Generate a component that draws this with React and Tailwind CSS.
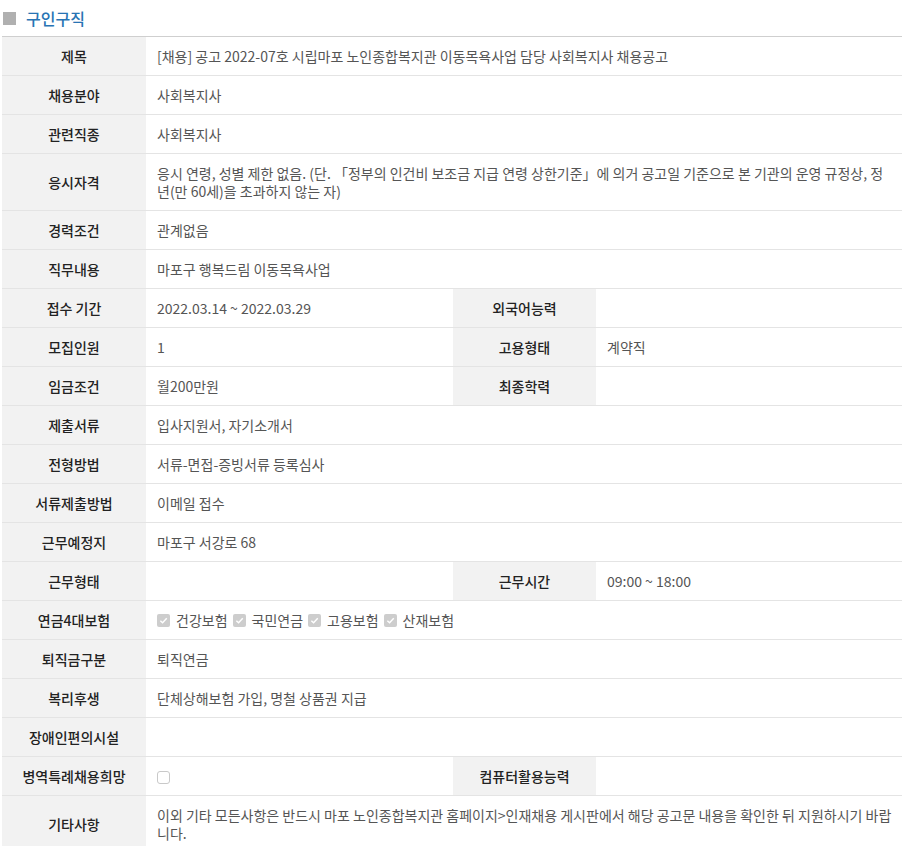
import React from "react";

const Check = ({ checked }) => (
    <span
        className={
            checked
                ? "inline-flex items-center justify-center w-[13px] h-[13px] rounded-[2px] bg-[#cdcdcd]"
                : "inline-block w-[13px] h-[13px] rounded-[3px] border border-[#c9c9c9] bg-white align-[-2px]"
        }
    >
        {checked && (
            <svg width="9" height="9" viewBox="0 0 10 10">
                <path d="M1.5 5.2 L4 7.6 L8.6 2.6" fill="none" stroke="#fff" strokeWidth="1.6" />
            </svg>
        )}
    </span>
);

const Label = ({ children }) => (
    <th className="bg-[#f2f2f2] text-[#222] font-medium text-center px-1 py-[10px] border-b border-[#e4e4e4]">
        {children}
    </th>
);

const Value = ({ children, span = 1 }) => (
    <td colSpan={span} className="text-[#555] pl-[11px] pr-[10px] py-[10px] border-b border-[#e4e4e4]">
        {children}
    </td>
);

const App = () => {
    const insurance = ["건강보험", "국민연금", "고용보험", "산재보험"];

    return (
        <div className="bg-white w-[923px] min-h-[846px] px-[2px] font-['Noto_Sans_CJK_KR','Noto_Sans',sans-serif] text-[14px] leading-[18px]">
            {/* 제목 */}
            <div className="flex items-center h-[36px] pl-[1px]">
                <span className="w-[13px] h-[13px] bg-[#b0b0b0] mr-[10px]"></span>
                <h3 className="text-[16px] text-[#2874b4] font-medium">구인구직</h3>
            </div>

            <table className="w-[900px] border-collapse table-fixed border-t border-[#cfcfcf]">
                <colgroup>
                    <col className="w-[144px]" />
                    <col className="w-[307px]" />
                    <col className="w-[143px]" />
                    <col className="w-[306px]" />
                </colgroup>
                <tbody>
                    <tr>
                        <Label>제목</Label>
                        <Value span={3}>[채용] 공고 2022-07호 시립마포 노인종합복지관 이동목욕사업 담당 사회복지사 채용공고</Value>
                    </tr>
                    <tr>
                        <Label>채용분야</Label>
                        <Value span={3}>사회복지사</Value>
                    </tr>
                    <tr>
                        <Label>관련직종</Label>
                        <Value span={3}>사회복지사</Value>
                    </tr>
                    <tr>
                        <Label>응시자격</Label>
                        <Value span={3}>
                            응시 연령, 성별 제한 없음. (단. 「정부의 인건비 보조금 지급 연령 상한기준」에 의거 공고일 기준으로 본 기관의 운영 규정상, 정년(만 60세)을 초과하지 않는 자)
                        </Value>
                    </tr>
                    <tr>
                        <Label>경력조건</Label>
                        <Value span={3}>관계없음</Value>
                    </tr>
                    <tr>
                        <Label>직무내용</Label>
                        <Value span={3}>마포구 행복드림 이동목욕사업</Value>
                    </tr>
                    <tr>
                        <Label>접수 기간</Label>
                        <Value>2022.03.14 ~ 2022.03.29</Value>
                        <Label>외국어능력</Label>
                        <Value></Value>
                    </tr>
                    <tr>
                        <Label>모집인원</Label>
                        <Value>1</Value>
                        <Label>고용형태</Label>
                        <Value>계약직</Value>
                    </tr>
                    <tr>
                        <Label>임금조건</Label>
                        <Value>월200만원</Value>
                        <Label>최종학력</Label>
                        <Value></Value>
                    </tr>
                    <tr>
                        <Label>제출서류</Label>
                        <Value span={3}>입사지원서, 자기소개서</Value>
                    </tr>
                    <tr>
                        <Label>전형방법</Label>
                        <Value span={3}>서류-면접-증빙서류 등록심사</Value>
                    </tr>
                    <tr>
                        <Label>서류제출방법</Label>
                        <Value span={3}>이메일 접수</Value>
                    </tr>
                    <tr>
                        <Label>근무예정지</Label>
                        <Value span={3}>마포구 서강로 68</Value>
                    </tr>
                    <tr>
                        <Label>근무형태</Label>
                        <Value></Value>
                        <Label>근무시간</Label>
                        <Value>09:00 ~ 18:00</Value>
                    </tr>
                    <tr>
                        <Label>연금4대보험</Label>
                        <Value span={3}>
                            <div className="flex items-center gap-[5px]">
                                {insurance.map((name) => (
                                    <span key={name} className="inline-flex items-center gap-[6px]">
                                        <Check checked />
                                        <span>{name}</span>
                                    </span>
                                ))}
                            </div>
                        </Value>
                    </tr>
                    <tr>
                        <Label>퇴직금구분</Label>
                        <Value span={3}>퇴직연금</Value>
                    </tr>
                    <tr>
                        <Label>복리후생</Label>
                        <Value span={3}>단체상해보험 가입, 명철 상품권 지급</Value>
                    </tr>
                    <tr>
                        <Label>장애인편의시설</Label>
                        <Value span={3}>&nbsp;</Value>
                    </tr>
                    <tr>
                        <Label>병역특례채용희망</Label>
                        <Value>
                            <Check />
                        </Value>
                        <Label>컴퓨터활용능력</Label>
                        <Value></Value>
                    </tr>
                    <tr>
                        <Label>기타사항</Label>
                        <Value span={3}>
                            이외 기타 모든사항은 반드시 마포 노인종합복지관 홈페이지&gt;인재채용 게시판에서 해당 공고문 내용을 확인한 뒤 지원하시기 바랍니다.
                        </Value>
                    </tr>
                </tbody>
            </table>
        </div>
    );
};

export default App;
